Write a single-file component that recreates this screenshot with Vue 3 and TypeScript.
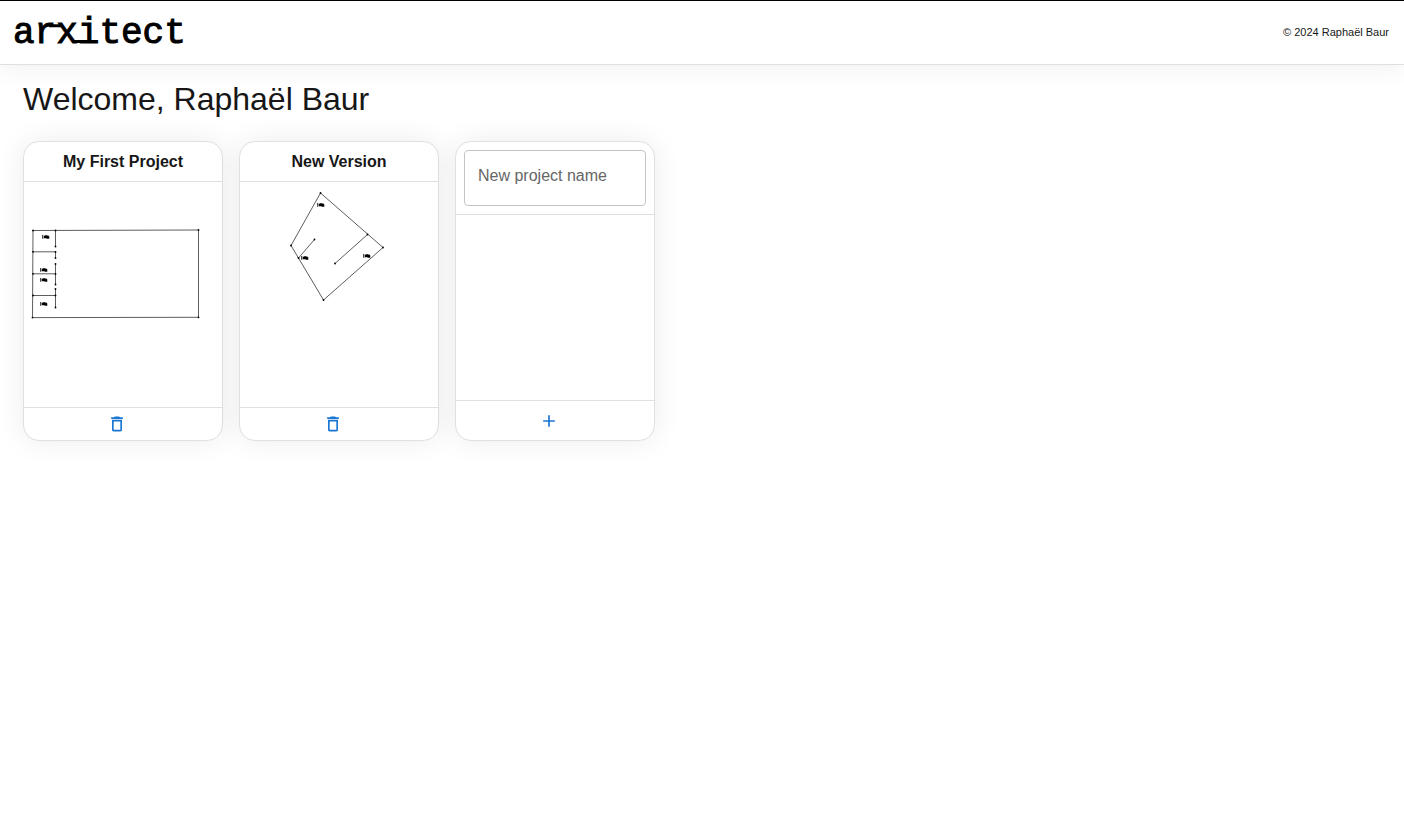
<script setup lang="ts">
import { ref } from 'vue'

type Segment = [number, number, number, number]
type Point = [number, number]

interface Project {
  name: string
  walls: Segment[]
  nodes: Point[]
  tags: Point[]
}

const projects = ref<Project[]>([
  {
    name: 'My First Project',
    walls: [
      [9, 48.5, 174.5, 48],
      [174.5, 48, 174.5, 135.3],
      [174.5, 135.3, 8.5, 135.6],
      [8.5, 135.6, 9, 48.5],
      [9, 69.8, 31.5, 69.8],
      [9, 91.8, 31.5, 91.8],
      [9, 113.5, 31.5, 113.5],
      [31.5, 49, 31.5, 65],
      [31.5, 70, 31.5, 76],
      [31.5, 82, 31.5, 103],
      [31.5, 107, 31.5, 126],
    ],
    nodes: [
      [9, 48.5], [31.5, 48.5], [174.5, 48], [174.5, 135.3], [8.5, 135.6], [9, 69.8], [9, 91.8], [9, 113.5],
      [31.5, 64.5], [31.5, 70], [31.5, 76], [31.5, 82], [31.5, 92], [31.5, 102.5],
      [31.5, 107], [31.5, 113.5], [31.5, 125.5],
    ],
    tags: [[18, 53], [16, 86], [16, 96], [16, 120]],
  },
  {
    name: 'New Version',
    walls: [
      [80.5, 11, 143, 65.5],
      [143, 65.5, 83.5, 118],
      [83.5, 118, 51, 63.5],
      [51, 63.5, 80.5, 11],
      [127.5, 52.5, 95, 81.5],
      [74.5, 57.5, 58.5, 76],
    ],
    nodes: [
      [80.5, 11], [143, 65.5], [83.5, 118], [51, 63.5],
      [127.5, 52.5], [95, 81.5], [74.5, 57.5], [58.5, 76],
    ],
    tags: [[77, 21], [61, 74], [123, 72]],
  },
])

const newName = ref('')

function removeProject(index: number) {
  projects.value.splice(index, 1)
}

function addProject() {
  const name = newName.value.trim()
  if (!name) return
  projects.value.push({ name, walls: [], nodes: [], tags: [] })
  newName.value = ''
}
</script>

<template>
  <div class="page">
    <header class="topbar">
      <svg class="logo" width="176" height="40" viewBox="0 0 176 40" role="img" aria-label="arxitect">
        <text class="wordmark" x="0" y="30">arxitect</text>
        <path class="ligature" d="M36 12.8H48M60 28.5H72" />
      </svg>
      <small class="copyright">© 2024 Raphaël Baur</small>
    </header>

    <main class="content">
      <h1 class="welcome">Welcome, Raphaël Baur</h1>
      <div class="cards">
        <article v-for="(project, i) in projects" :key="project.name" class="card">
          <h2 class="title">{{ project.name }}</h2>
          <div class="preview">
            <svg width="198" height="140" viewBox="0 0 198 140" aria-hidden="true">
              <line v-for="(w, k) in project.walls" :key="'w' + k" class="wall" :x1="w[0]" :y1="w[1]" :x2="w[2]" :y2="w[3]" />
              <circle v-for="(n, k) in project.nodes" :key="'n' + k" :cx="n[0]" :cy="n[1]" r="0.9" />
              <path
                v-for="(t, k) in project.tags"
                :key="'t' + k"
                :transform="`translate(${t[0]} ${t[1]})`"
                d="M.3 0H1.2V3.8H.3ZM1.8 .8H2.8V.2H5V.5H6.6V1.2H7.3V3.7H4.6V3.2H1.8Z"
              />
            </svg>
          </div>
          <footer class="actions">
            <button class="action" type="button" aria-label="Delete project" @click="removeProject(i)">
              <svg class="icon" viewBox="0 0 24 24" aria-hidden="true">
                <path d="M6 19c0 1.1.9 2 2 2h8c1.1 0 2-.9 2-2V7H6zM8 9h8v10H8zm7.5-5-1-1h-5l-1 1H5v2h14V4z" />
              </svg>
            </button>
          </footer>
        </article>

        <form class="card" @submit.prevent="addProject">
          <div class="field">
            <input v-model="newName" class="name" type="text" placeholder="New project name" aria-label="New project name" />
          </div>
          <div class="preview"></div>
          <footer class="actions tall">
            <button class="action" type="submit" aria-label="Add project">
              <svg class="icon" viewBox="0 0 24 24" aria-hidden="true">
                <path d="M19 13h-6v6h-2v-6H5v-2h6V5h2v6h6z" />
              </svg>
            </button>
          </footer>
        </form>
      </div>
    </main>
  </div>
</template>

<style>
body {
  margin: 0;
  background: #fff;
}
</style>

<style scoped>
.page {
  min-height: 100vh;
  box-sizing: border-box;
  border-top: 1px solid #000;
  color: #171717;
  font-family: "Liberation Sans", Arial, sans-serif;
}
.topbar {
  display: flex;
  align-items: center;
  justify-content: space-between;
  padding: 12px 15px 11px 13px;
  border-bottom: 1px solid #e0e0e0;
  box-shadow: 0 0 28px rgba(0, 0, 0, 0.08);
}
.logo {
  display: block;
  overflow: visible;
}
.wordmark {
  font-family: "Liberation Mono", monospace;
  font-size: 36px;
  fill: #000;
  stroke: #000;
  stroke-width: 1;
}
.ligature {
  fill: none;
  stroke: #000;
  stroke-width: 3;
}
.copyright {
  padding-bottom: 2px;
  font-size: 11px;
  line-height: 16px;
}
.content {
  padding: 16px 23px;
}
.welcome {
  margin: 0 0 24px;
  font-size: 32px;
  line-height: 36px;
  font-weight: 400;
}
.cards {
  display: flex;
  flex-wrap: wrap;
  gap: 16px;
}
.card {
  display: flex;
  flex-direction: column;
  box-sizing: border-box;
  width: 200px;
  min-height: 300px;
  overflow: hidden;
  background: #fff;
  border: 1px solid #e0e0e0;
  border-radius: 16px;
  box-shadow: 0 0 28px rgba(0, 0, 0, 0.08);
}
.title {
  margin: 0;
  padding: 8px;
  border-bottom: 1px solid #e0e0e0;
  font-size: 16px;
  line-height: 23px;
  font-weight: 700;
  text-align: center;
}
.preview {
  flex: 1;
}
.preview svg {
  display: block;
}
.wall {
  stroke: #333;
  stroke-width: 0.8;
}
.actions {
  display: flex;
  border-top: 1px solid #e0e0e0;
}
.action {
  flex: 1;
  display: flex;
  justify-content: center;
  padding: 6px 20px 6px 8px;
  border: 0;
  background: none;
  color: #1976d2;
  cursor: pointer;
}
.tall .action {
  padding-top: 10px;
  padding-bottom: 9px;
}
.icon {
  width: 20px;
  height: 20px;
  fill: currentColor;
}
.field {
  padding: 8px;
  border-bottom: 1px solid #e0e0e0;
}
.name {
  display: block;
  box-sizing: border-box;
  width: 100%;
  height: 56px;
  padding: 0 13px 4px;
  border: 1px solid #c4c4c4;
  border-radius: 4px;
  background: none;
  color: #171717;
  font-family: "Liberation Sans", Arial, sans-serif;
  font-size: 16px;
}
.name::placeholder {
  color: #666;
  opacity: 1;
}
</style>
